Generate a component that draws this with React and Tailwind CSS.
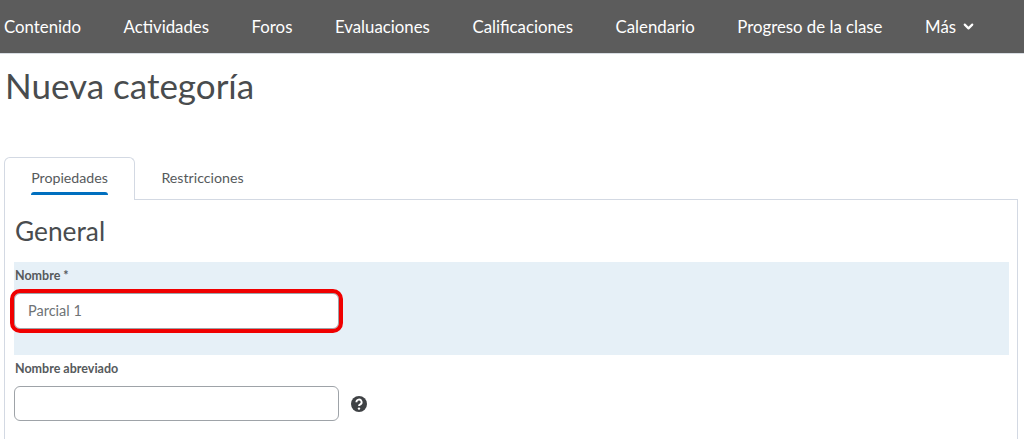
import React from 'react';
import { ChevronDown } from 'lucide-react';

const navItems = ['Contenido', 'Actividades', 'Foros', 'Evaluaciones', 'Calificaciones', 'Calendario', 'Progreso de la clase'];

const HelpIcon = () => (
  <svg width="16" height="16" viewBox="0 0 16 16" className="shrink-0">
    <circle cx="8" cy="8" r="8" fill="#3f4245" />
    <path d="M5.4 6.2a2.6 2.6 0 1 1 3.9 2.2c-.9.5-1.3.9-1.3 1.6" fill="none" stroke="#fff" strokeWidth="1.9" />
    <circle cx="8" cy="12.6" r="1.2" fill="#fff" />
  </svg>
);

const App = () => {
  return (
    <div className="w-[1024px] h-[439px] overflow-hidden bg-white font-['Lato','Noto_Sans',sans-serif] text-[#494c4e]">
      <nav className="h-[54px] bg-[#5c5c5c] border-b border-[#d8dde3] flex items-center gap-[42.6px] pl-1 text-white text-[16.8px]">
        {navItems.map((item) => (
          <span key={item} className="whitespace-nowrap">{item}</span>
        ))}
        <span className="flex items-center gap-[5px] whitespace-nowrap">
          Más
          <ChevronDown size={15} strokeWidth={3.5} />
        </span>
      </nav>

      <h1 className="h-[66px] pl-[5px] pt-[10px] text-[35px] leading-[42px] font-normal">Nueva categoría</h1>

      <div className="flex h-[38px] mt-[42px] pl-1 -mb-px items-end">
        <div className="relative z-10 w-[131px] h-[43px] bg-white border border-b-0 border-[#d3d9e3] rounded-t-md flex flex-col items-center pt-[9px] text-[14.2px] text-[#565a5c]">
          <span>Propiedades</span>
          <span className="absolute left-[26px] bottom-[5px] w-[77px] h-[3px] rounded-t-sm bg-[#006fbf]"></span>
        </div>
        <div className="w-[135px] h-[43px] flex justify-center pt-[10px] text-[14.2px] text-[#565a5c] border-b border-[#d3d9e3]">
          Restricciones
        </div>
      </div>

      <section className="ml-1 mr-[6px] h-[240px] border border-[#d3d9e3] border-b-0 pl-[9px] pr-2 pt-[15px]">
        <h2 className="text-[26.3px] leading-[32px] pl-px font-normal">General</h2>

        <div className="mt-[15px] h-[93px] bg-[#e6f0f7] pt-[6px] flex flex-col">
          <label className="text-[12.5px] font-bold leading-4 pl-px text-[#565a5c]">Nombre *</label>
          <div className="mt-[9px] w-[325px] h-[36px] bg-white border border-[#9ea3a8] rounded-md flex items-center pl-[13px] text-[14.5px] text-[#6e7376] outline-[4.5px] outline-[#f00000] outline-offset-0">
            Parcial 1
          </div>
        </div>

        <label className="block mt-[6px] text-[12.5px] font-bold leading-4 pl-px text-[#565a5c]">Nombre abreviado</label>
        <div className="mt-[9px] flex items-center gap-[12px]">
          <div className="w-[325px] h-[35px] bg-white border border-[#9ea3a8] rounded-md"></div>
          <HelpIcon />
        </div>
      </section>
    </div>
  );
};

export default App;
